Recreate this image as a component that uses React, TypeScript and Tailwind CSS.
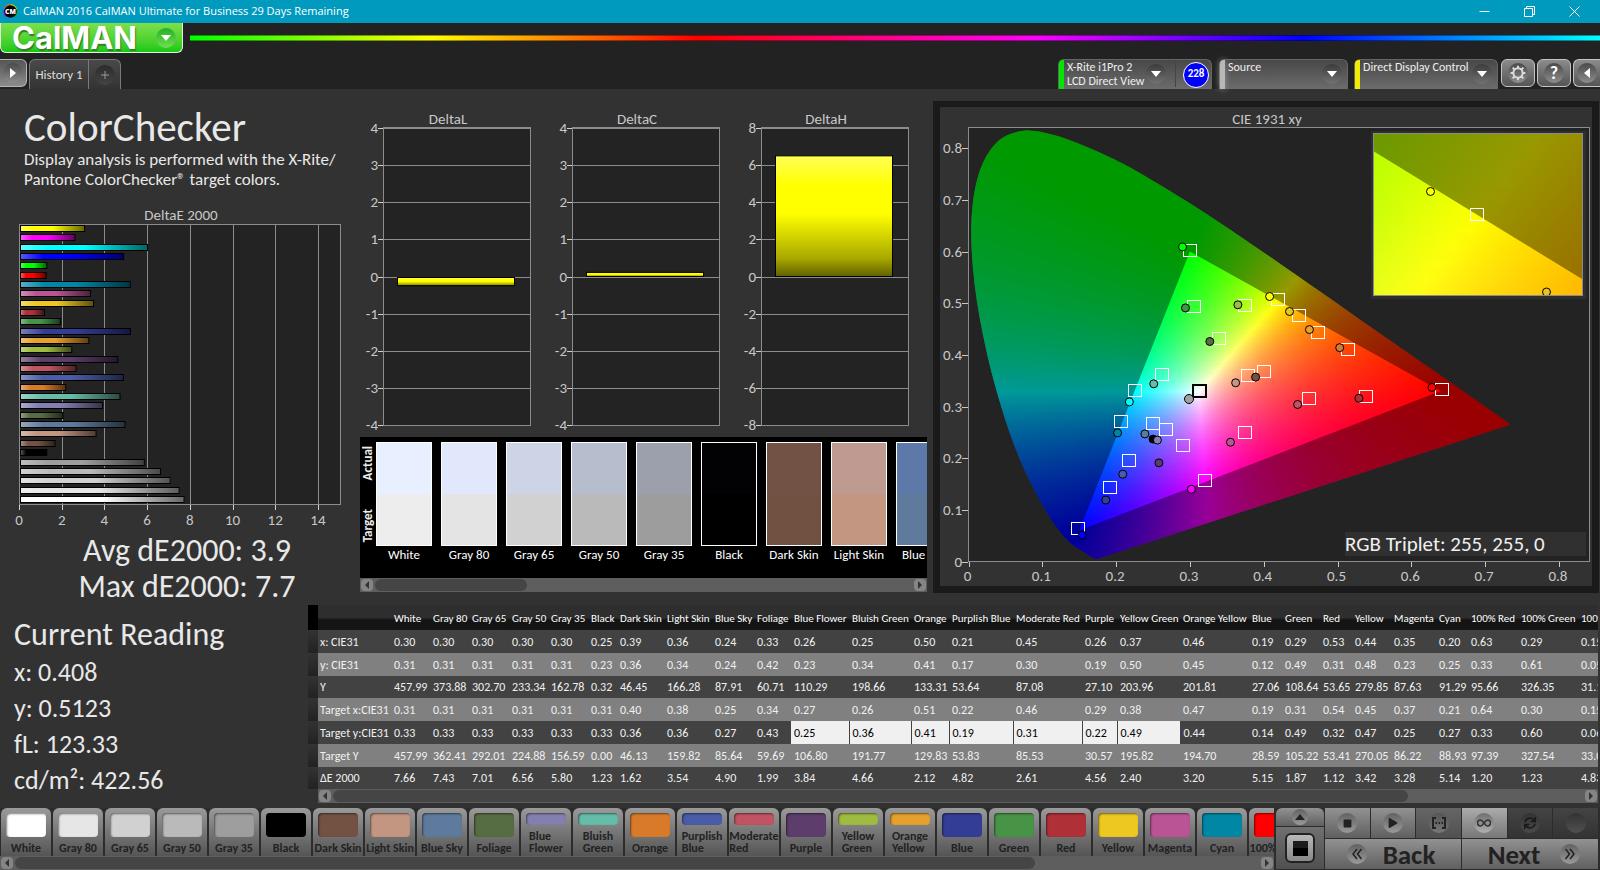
import type { ReactNode } from "react";
import { FaPlay, FaStop, FaSync } from "react-icons/fa";
import { twMerge } from "tailwind-merge";

type Patch = {
  name: string;
  target: string;
  lines?: [string, string];
  values: string[];
  width: string;
};

const ROW_LABELS = ["x: CIE31", "y: CIE31", "Y", "Target x:CIE31", "Target y:CIE31", "Target Y", "ΔE 2000"];

const PATCHES: Patch[] = [
  { name: "White", target: "#ffffff", width: "w-[39px]", values: ["0.30", "0.31", "457.99", "0.31", "0.33", "457.99", "7.66"] },
  { name: "Gray 80", target: "#e6e6e6", width: "w-[39px]", values: ["0.30", "0.31", "373.88", "0.31", "0.33", "362.41", "7.43"] },
  { name: "Gray 65", target: "#d1d1d1", width: "w-[40px]", values: ["0.30", "0.31", "302.70", "0.31", "0.33", "292.01", "7.01"] },
  { name: "Gray 50", target: "#bababa", width: "w-[39px]", values: ["0.30", "0.31", "233.34", "0.31", "0.33", "224.88", "6.56"] },
  { name: "Gray 35", target: "#9e9e9e", width: "w-[40px]", values: ["0.30", "0.31", "162.78", "0.31", "0.33", "156.59", "5.80"] },
  { name: "Black", target: "#000000", width: "w-[29px]", values: ["0.25", "0.23", "0.32", "0.31", "0.33", "0.00", "1.23"] },
  { name: "Dark Skin", target: "#735244", width: "w-[47px]", values: ["0.39", "0.36", "46.45", "0.40", "0.36", "46.13", "1.62"] },
  { name: "Light Skin", target: "#c39682", width: "w-[48px]", values: ["0.36", "0.34", "166.28", "0.38", "0.36", "159.82", "3.54"] },
  { name: "Blue Sky", target: "#5e7a9c", width: "w-[42px]", values: ["0.24", "0.24", "87.91", "0.25", "0.27", "85.64", "4.90"] },
  { name: "Foliage", target: "#566c42", width: "w-[37px]", values: ["0.33", "0.42", "60.71", "0.34", "0.43", "59.69", "1.99"] },
  { name: "Blue Flower", target: "#8380b1", lines: ["Blue", "Flower"], width: "w-[58px]", values: ["0.26", "0.23", "110.29", "0.27", "0.25", "106.80", "3.84"] },
  { name: "Bluish Green", target: "#65bda9", lines: ["Bluish", "Green"], width: "w-[62px]", values: ["0.25", "0.34", "198.66", "0.26", "0.36", "191.77", "4.66"] },
  { name: "Orange", target: "#d87a2a", width: "w-[38px]", values: ["0.50", "0.41", "133.31", "0.51", "0.41", "129.83", "2.12"] },
  { name: "Purplish Blue", target: "#4a5ca7", lines: ["Purplish", "Blue"], width: "w-[64px]", values: ["0.21", "0.17", "53.64", "0.22", "0.19", "53.83", "4.82"] },
  { name: "Moderate Red", target: "#c25362", lines: ["Moderate", "Red"], width: "w-[69px]", values: ["0.45", "0.30", "87.08", "0.46", "0.31", "85.53", "2.61"] },
  { name: "Purple", target: "#5c3d6b", width: "w-[35px]", values: ["0.26", "0.19", "27.10", "0.29", "0.22", "30.57", "4.56"] },
  { name: "Yellow Green", target: "#9fbc40", lines: ["Yellow", "Green"], width: "w-[63px]", values: ["0.37", "0.50", "203.96", "0.38", "0.49", "195.82", "2.40"] },
  { name: "Orange Yellow", target: "#e6a02d", lines: ["Orange", "Yellow"], width: "w-[69px]", values: ["0.46", "0.45", "201.81", "0.47", "0.44", "194.70", "3.20"] },
  { name: "Blue", target: "#333d96", width: "w-[33px]", values: ["0.19", "0.12", "27.06", "0.19", "0.14", "28.59", "5.15"] },
  { name: "Green", target: "#479447", width: "w-[38px]", values: ["0.29", "0.49", "108.64", "0.31", "0.49", "105.22", "1.87"] },
  { name: "Red", target: "#b03038", width: "w-[32px]", values: ["0.53", "0.31", "53.65", "0.54", "0.32", "53.41", "1.12"] },
  { name: "Yellow", target: "#edc821", width: "w-[39px]", values: ["0.44", "0.48", "279.85", "0.45", "0.47", "270.05", "3.42"] },
  { name: "Magenta", target: "#bb5495", width: "w-[45px]", values: ["0.35", "0.23", "87.63", "0.37", "0.25", "86.22", "3.28"] },
  { name: "Cyan", target: "#0087a6", width: "w-[32px]", values: ["0.20", "0.25", "91.29", "0.21", "0.27", "88.93", "5.14"] },
  { name: "100% Red", target: "#ff0000", width: "w-[50px]", values: ["0.63", "0.33", "95.66", "0.64", "0.33", "97.39", "1.20"] },
  { name: "100% Green", target: "#00ff00", width: "w-[60px]", values: ["0.29", "0.61", "326.35", "0.30", "0.60", "327.54", "1.23"] },
  { name: "100% Blue", target: "#0000ff", width: "w-[54px]", values: ["0.15", "0.05", "31.10", "0.15", "0.06", "33.02", "4.83"] },
];

const ACTUAL = ["#e8efff", "#e1e8fc", "#cdd4e6", "#b6bdcd", "#9ca0ac", "#020204", "#725244", "#bf9a90", "#5c79aa"];
const TARGET = ["#ededed", "#e4e4e4", "#d1d1d1", "#bababa", "#9d9d9d", "#000000", "#715142", "#c39681", "#5e7a9c"];

const DELTA_E: [string, number][] = [
  ["#ffff00", 3.0],
  ["#ff00ff", 2.55],
  ["#00ffff", 5.95],
  ...PATCHES.map((p): [string, number] => [p.target, Number(p.values[6])]).reverse(),
];

/* CIE diagram */

const LOCUS: [number, number][] = [
  [0.1741, 0.005], [0.1714, 0.0051], [0.1689, 0.0069], [0.1644, 0.0109], [0.1566, 0.0177],
  [0.144, 0.0297], [0.1355, 0.0399], [0.1241, 0.0578], [0.1096, 0.0868], [0.0913, 0.1327],
  [0.0687, 0.2007], [0.0454, 0.295], [0.0235, 0.4127], [0.0082, 0.5384], [0.0039, 0.6548],
  [0.0139, 0.7502], [0.0389, 0.812], [0.0743, 0.8338], [0.1142, 0.8262], [0.1547, 0.8059],
  [0.1929, 0.7816], [0.2296, 0.7543], [0.3016, 0.6923], [0.3731, 0.6245], [0.4441, 0.5547],
  [0.5125, 0.4866], [0.5752, 0.4242], [0.627, 0.3725], [0.6658, 0.334], [0.6915, 0.3083],
  [0.719, 0.2809], [0.7347, 0.2653],
];

const TARGET_POINTS: [number, number][] = [
  [0.3, 0.602], [0.305, 0.492], [0.375, 0.495], [0.34, 0.43], [0.262, 0.362], [0.225, 0.33],
  [0.207, 0.271], [0.25, 0.267], [0.268, 0.255], [0.29, 0.223], [0.217, 0.194], [0.192, 0.142],
  [0.149, 0.063], [0.321, 0.156], [0.374, 0.248], [0.379, 0.359], [0.4, 0.367], [0.42, 0.507],
  [0.448, 0.476], [0.474, 0.442], [0.514, 0.409], [0.462, 0.314], [0.538, 0.318], [0.641, 0.332],
];

const ACTUAL_POINTS: [number, number, string][] = [
  [0.29, 0.609, "#00ff00"], [0.294, 0.491, "#46934a"], [0.365, 0.497, "#9dbb40"],
  [0.327, 0.426, "#566c41"], [0.251, 0.344, "#66bcab"], [0.218, 0.309, "#00ffff"],
  [0.202, 0.249, "#0085a4"], [0.239, 0.247, "#5d7a9f"], [0.25, 0.237, "#000000"],
  [0.256, 0.235, "#8380af"], [0.258, 0.191, "#5b3c69"], [0.209, 0.169, "#4b5ba6"],
  [0.186, 0.119, "#333f98"], [0.154, 0.051, "#0000ff"], [0.302, 0.14, "#ff00ff"],
  [0.355, 0.231, "#ba5596"], [0.362, 0.346, "#c49683"], [0.389, 0.357, "#735244"],
  [0.408, 0.513, "#ffff00"], [0.435, 0.484, "#e8c520"], [0.462, 0.449, "#e6a02e"],
  [0.503, 0.414, "#d77a2a"], [0.446, 0.304, "#c15264"], [0.529, 0.316, "#af2f38"],
  [0.628, 0.337, "#ff0000"],
];

type View = { x0: number; y0: number; sx: number; sy: number };

const MAIN: View = { x0: 28.5, y0: 454.5, sx: 738, sy: 516.5 };
const INSET: View = { x0: 537 - 0.4193 * 4300, y0: 107.5 + 0.5053 * 3320, sx: 4300, sy: 3320 };

const px = (v: View, x: number) => v.x0 + x * v.sx;
const py = (v: View, y: number) => v.y0 - y * v.sy;

function colorAt(x: number, y: number): number[] {
  const yy = Math.max(y, 0.001);
  const X = x / yy;
  const Z = (1 - x - yy) / yy;
  const rgb = [
    3.2406 * X - 1.5372 - 0.4986 * Z,
    -0.9689 * X + 1.8758 + 0.0415 * Z,
    0.0557 * X - 0.204 + 1.057 * Z,
  ].map((c) => Math.max(0, c));
  const top = Math.max(...rgb);
  return rgb.map((c) => Math.round((c / top) * 255));
}

// Fewest stops that keep a row within a few levels of the true colour.
function rowStops(v: View, y: number, from: number, to: number): [number, number[]][] {
  const at = (p: number) => colorAt((p - v.x0) / v.sx, y);
  const split = (a: number, ca: number[], b: number, cb: number[]): [number, number[]][] => {
    if (b - a < 2) return [[b, cb]];
    const m = (a + b) / 2;
    const cm = at(m);
    const off = Math.max(...cm.map((c, i) => Math.abs(c - (ca[i] + cb[i]) / 2)));
    if (off < 3 && b - a < 40) return [[b, cb]];
    return [...split(a, ca, m, cm), ...split(m, cm, b, cb)];
  };
  const first = at(from);
  return [[from, first], ...split(from, first, to, at(to))];
}

function Spectrum({ id, view, box }: { id: string; view: View; box: [number, number, number, number] }) {
  const [left, top, right, bottom] = box;
  const step = 2;
  const rows: number[] = [];
  for (let y = top; y < bottom; y += step) rows.push(y);
  return (
    <g shapeRendering="crispEdges">
      {rows.map((r) => (
        <g key={r}>
          <linearGradient id={`${id}${r}`} gradientUnits="userSpaceOnUse" x1={left} x2={right} y1="0" y2="0">
            {rowStops(view, (view.y0 - r - step / 2) / view.sy, left, right).map(([p, c]) => (
              <stop key={p} offset={(p - left) / (right - left)} stopColor={`rgb(${c.join(",")})`} />
            ))}
          </linearGradient>
          <rect x={left} y={r} width={right - left} height={step} fill={`url(#${id}${r})`} />
        </g>
      ))}
    </g>
  );
}

function locusPath(v: View) {
  const p = LOCUS.map(([x, y]) => [px(v, x), py(v, y)]);
  let d = `M${p[0][0]} ${p[0][1]}`;
  for (let i = 0; i < p.length - 1; i++) {
    const a = p[Math.max(0, i - 1)];
    const b = p[i];
    const c = p[i + 1];
    const e = p[Math.min(p.length - 1, i + 2)];
    d += `C${b[0] + (c[0] - a[0]) / 6} ${b[1] + (c[1] - a[1]) / 6} ${c[0] - (e[0] - b[0]) / 6} ${c[1] - (e[1] - b[1]) / 6} ${c[0]} ${c[1]}`;
  }
  return d + "Z";
}

function shadePath(v: View) {
  const t = [[0.64, 0.33], [0.3, 0.6], [0.15, 0.06]].map(([x, y]) => `${px(v, x)} ${py(v, y)}`);
  return `M0 0H652V480H0ZM${t.join("L")}Z`;
}

function CieChart() {
  return (
    <svg viewBox="0 0 652 479" className="block w-full text-[15px]" role="img" aria-label="CIE 1931 xy">
      <defs>
        <clipPath id="locus">
          <path d={locusPath(MAIN)} />
        </clipPath>
        <clipPath id="inset">
          <rect x="434" y="27" width="208" height="161" />
        </clipPath>
      </defs>
      <text x="327" y="17" textAnchor="middle" fill="#c8c8c8">CIE 1931 xy</text>
      <rect x="28.5" y="20.5" width="621" height="434" fill="#232323" stroke="#8c8c8c" />
      {[0, 0.1, 0.2, 0.3, 0.4, 0.5, 0.6, 0.7, 0.8].map((t) => (
        <g key={t} fill="#c8c8c8">
          <rect x={Math.round(px(MAIN, t))} y="455" width="1" height="5" />
          <text x={px(MAIN, t) - 1} y="474" textAnchor="middle">{t}</text>
          <rect x="22" y={Math.round(py(MAIN, t))} width="6" height="1" />
          <text x="22" y={py(MAIN, t) + 5} textAnchor="end">{t}</text>
        </g>
      ))}
      <g clipPath="url(#locus)">
        <Spectrum id="m" view={MAIN} box={[29, 22, 573, 454]} />
        <path d={shadePath(MAIN)} fillRule="evenodd" opacity="0.4" />
      </g>
      {TARGET_POINTS.map(([x, y]) => (
        <rect key={`${x}-${y}`} x={Math.round(px(MAIN, x)) - 6.5} y={Math.round(py(MAIN, y)) - 6.5} width="13" height="12" fill="none" stroke="#fff" />
      ))}
      <rect x="253" y="278" width="13" height="12" fill="none" stroke="#000" strokeWidth="2" />
      <circle cx="249" cy="292" r="4.5" fill="#a0a0a0" stroke="#000" />
      {ACTUAL_POINTS.map(([x, y, c]) => (
        <circle key={`${x}-${y}`} cx={px(MAIN, x)} cy={py(MAIN, y)} r="4" fill={c} stroke="#000" />
      ))}
      <rect x="431" y="24" width="215" height="168" fill="#2e2e2e" />
      <g clipPath="url(#inset)">
        <Spectrum id="z" view={INSET} box={[434, 26, 642, 188]} />
        <path d={shadePath(INSET)} fillRule="evenodd" opacity="0.4" />
        <rect x="530.5" y="101.5" width="13" height="12" fill="none" stroke="#fff" />
        <circle cx="490.5" cy="84.5" r="4" fill="#ffff00" stroke="#000" />
        <circle cx="606.5" cy="185" r="4" fill="#e8c520" stroke="#000" />
      </g>
      <rect x="433.5" y="26.5" width="209" height="162" fill="none" stroke="#8c8c8c" />
      <rect x="405" y="425" width="241" height="24" fill="#303030" />
      <text x="405" y="444" fill="#f0f0f0" className="text-[21px]">RGB Triplet: 255, 255, 0</text>
    </svg>
  );
}

function DeltaEChart() {
  return (
    <svg viewBox="0 0 360 324" className="mt-4 block w-full text-[15px]" role="img" aria-label="DeltaE 2000">
      <defs>
        <linearGradient id="sheenX">
          <stop offset="0" stopColor="#fff" stopOpacity="0.35" />
          <stop offset="0.22" stopColor="#fff" stopOpacity="0" />
          <stop offset="0.5" stopColor="#000" stopOpacity="0" />
          <stop offset="1" stopColor="#000" stopOpacity="0.6" />
        </linearGradient>
      </defs>
      <text x="181" y="14" textAnchor="middle" fill="#c8c8c8">DeltaE 2000</text>
      <rect x="19.5" y="18.5" width="321" height="280" fill="#232323" stroke="#8c8c8c" />
      {[0, 2, 4, 6, 8, 10, 12, 14].map((t) => (
        <g key={t}>
          <rect x={Math.floor(19.5 + t * 21.35)} y="19" width="1" height="280" fill="#8c8c8c" />
          <rect x={Math.floor(19.5 + t * 21.35)} y="299" width="1" height="5" fill="#d0d0d0" />
          <text x={19 + t * 21.35} y="319" textAnchor="middle" fill="#c8c8c8">{t}</text>
        </g>
      ))}
      {DELTA_E.map(([color, value], i) => {
        const box = { x: 20.5, y: Math.round(19 + i * 9.34) + 0.5, width: value * 21.35, height: 6 };
        return (
          <g key={i}>
            <rect {...box} fill={color} />
            <rect {...box} fill="url(#sheenX)" stroke="#000" />
          </g>
        );
      })}
    </svg>
  );
}

function DeltaChart({ title, max, value }: { title: string; max: number; value: number }) {
  const unit = 148.5 / max;
  const zero = 169.5;
  const ticks = [4, 3, 2, 1, 0, -1, -2, -3, -4].map((t) => (t * max) / 4);
  const box = { x: 37.5, y: value > 0 ? zero - value * unit : zero + 1, width: 117, height: Math.abs(value) * unit };
  const id = `sheen${title}`;
  return (
    <svg viewBox="0 0 189 330" className="block w-full text-[15px]" role="img" aria-label={title}>
      <linearGradient id={id} x1="0" x2="0" y1="0" y2="1">
        <stop offset="0" stopColor="#ffff55" />
        <stop offset="0.25" stopColor="#ffff00" />
        <stop offset="0.48" stopColor="#ffff00" />
        <stop offset="0.85" stopColor="#a8a800" />
        <stop offset="1" stopColor="#606000" />
      </linearGradient>
      <text x="88" y="17" textAnchor="middle" fill="#c8c8c8">{title}</text>
      <rect x="23.5" y="20.5" width="147" height="298" fill="#232323" stroke="#8c8c8c" />
      {ticks.map((t) => (
        <g key={t}>
          <rect x="18" y={Math.round(zero - t * unit)} width="5" height="1" fill="#d0d0d0" />
          <rect x="23" y={Math.round(zero - t * unit)} width="148" height="1" fill="#8c8c8c" />
          <text x="18" y={zero - t * unit + 5} textAnchor="end" fill="#c8c8c8">{t}</text>
        </g>
      ))}
      <rect {...box} fill={`url(#${id})`} stroke="#000" />
    </svg>
  );
}

/* Small parts */

function ScrollBar({ thumb, label }: { thumb: string; label: string }) {
  return (
    <div className="flex h-[14px] shrink-0 items-center bg-[#5e5e5e] px-px" role="group" aria-label={label}>
      <ScrollArrow dir="left" />
      <div className="flex h-full flex-1 px-0.5 py-px">
        <div className={`rounded-md bg-[#454545] ${thumb}`} />
      </div>
      <ScrollArrow dir="right" />
    </div>
  );
}

function ScrollArrow({ dir }: { dir: "left" | "right" }) {
  return (
    <button aria-label={`Scroll ${dir}`} className="flex h-3 w-3 shrink-0 items-center justify-center rounded-sm bg-[#858585]">
      <svg viewBox="0 0 6 8" className="h-2 w-1.5 fill-[#333]">
        <path d={dir === "left" ? "M5 0V8L1 4Z" : "M1 0V8L5 4Z"} />
      </svg>
    </button>
  );
}

function Knob({ children, className = "" }: { children?: ReactNode; className?: string }) {
  return (
    <span className={twMerge("flex size-5 shrink-0 items-center justify-center rounded-full bg-linear-to-b from-[#4a4a4a] to-[#8e8e8e]", className)}>
      {children}
    </span>
  );
}

function Caret({ className = "" }: { className?: string }) {
  return (
    <svg viewBox="0 0 10 6" className={`h-1.5 w-2.5 fill-current ${className}`}>
      <path d="M0 0H10L5 6Z" />
    </svg>
  );
}

function DeviceTab({ bar, lines, width, children }: { bar: string; lines: string[]; width: string; children?: ReactNode }) {
  return (
    <div className={`flex h-[30px] rounded-t-md border border-b-0 border-[#666] bg-linear-to-b from-[#484848] to-[#6c6c6c] ${width}`}>
      <span className={`w-[5px] shrink-0 rounded-tl-sm ${bar}`} />
      <button className="flex min-w-0 flex-1 items-start justify-between pr-[5px] pl-[3px] text-left text-xs leading-[14px] whitespace-nowrap text-[#eee]">
        <span>
          {lines.map((l) => (
            <span key={l} className="block">{l}</span>
          ))}
        </span>
        <Knob className="mt-1 -ml-2 from-[#3c3c3c] to-[#727272] text-white">
          <Caret />
        </Knob>
      </button>
      {children}
    </div>
  );
}

const squareButton =
  "flex h-7 items-center justify-center rounded-md border border-[#c4c4c4] bg-linear-to-b from-[#8c8c8c] to-[#555]";

function TitleBar() {
  return (
    <div className="flex h-[23px] items-center bg-[#009abf] [font-family:'Open_Sans',sans-serif] text-white">
      <svg viewBox="0 0 18 18" className="mx-[3px] size-[15px] overflow-visible">
        <path d="M9 9V0A9 9 0 0 1 17 6Z" fill="#b5e000" />
        <path d="M9 9 17 6A9 9 0 0 1 14 16Z" fill="#00b050" />
        <path d="M9 9 14 16A9 9 0 0 1 4 16Z" fill="#00a8e0" />
        <path d="M9 9 4 16A9 9 0 0 1 1 6Z" fill="#b010d0" />
        <path d="M9 9 1 6A9 9 0 0 1 9 0Z" fill="#ff6a00" />
        <circle cx="9" cy="9" r="7.5" fill="#000" />
        <text x="9" y="12" textAnchor="middle" fontSize="8" fontWeight="800" fill="#fff">CM</text>
      </svg>
      <h1 className="ml-0.5 text-[11px]">CalMAN 2016 CalMAN Ultimate for Business 29 Days Remaining</h1>
      <div className="ml-auto flex pr-[3px]">
        <button aria-label="Minimize" className="flex w-[45px] justify-center">
          <svg viewBox="0 0 11 11" className="size-[11px]" stroke="#fff" fill="none"><path d="M0.5 5.5H10.5" /></svg>
        </button>
        <button aria-label="Restore" className="flex w-[45px] justify-center">
          <svg viewBox="0 0 11 11" className="size-[11px]" stroke="#fff" fill="none"><path d="M0.5 2.5H8.5V10.5H0.5ZM2.5 2.5V0.5H10.5V8.5H8.5" /></svg>
        </button>
        <button aria-label="Close" className="flex w-[45px] justify-center">
          <svg viewBox="0 0 11 11" className="size-[11px]" stroke="#fff" fill="none"><path d="M0.5 0.5 10.5 10.5M10.5 0.5 0.5 10.5" /></svg>
        </button>
      </div>
    </div>
  );
}

function Header() {
  return (
    <header className="bg-[#222] text-white">
      <div className="flex h-[30px] items-center gap-[7px]">
        <button className="flex h-full w-[183px] items-center rounded-b-md border border-t-0 border-[#dff5d8] bg-linear-to-b from-[#7be04c] to-[#10c814] pl-[11px]">
          <span className="[font-family:Inter,sans-serif] text-[31px] leading-none font-bold [text-shadow:1px_2px_1px_#3a7a2a]">CalMAN</span>
          <Knob className="mr-1.5 ml-auto from-[#1fae2a] to-[#6fe04f]">
            <Caret />
          </Knob>
        </button>
        <div className="h-1.5 flex-1 border-y border-black/40 bg-[linear-gradient(to_right,#00ff00_0%,#ffff00_17%,#ff0000_36%,#ff00ff_60%,#0000ff_79%,#00ffff_100%)]" />
      </div>
      <div className="flex h-9 items-end justify-between">
        <div className="flex items-end">
          <button aria-label="Expand" className="mb-0.5 flex h-7 w-[27px] items-center justify-center rounded-r-md border border-l-0 border-[#b4b4b4] bg-linear-to-b from-[#555] to-[#8c8c8c]">
            <Knob>
              <Caret className="-rotate-90" />
            </Knob>
          </button>
          <div className="ml-0.5 flex h-[30px] rounded-t-md border border-b-0 border-[#7a7a7a] bg-linear-to-b from-[#494949] to-[#333] text-[#ddd]">
            <button className="w-[58px] text-[13px]">History 1</button>
            <button aria-label="Add tab" className="flex w-8 items-center justify-center border-l border-[#7a7a7a]">
              <Knob className="from-[#2c2c2c] to-[#444] text-[#999]">
                <svg viewBox="0 0 8 8" className="size-2" stroke="currentColor"><path d="M4 0V8M0 4H8" /></svg>
              </Knob>
            </button>
          </div>
        </div>
        <div className="flex items-end">
          <DeviceTab bar="bg-[#00e600]" lines={["X-Rite i1Pro 2", "LCD Direct View"]} width="w-[154px]">
            <span className="my-0.5 ml-1 w-px bg-[#444]" />
            <span className="mr-0.5 ml-[7px] flex size-[26px] shrink-0 items-center justify-center self-center rounded-full border border-white bg-[#0000ff] text-[11px] font-bold">228</span>
          </DeviceTab>
          <span className="w-[7px]" />
          <DeviceTab bar="bg-[#b8b8b8] shadow-[0_0_6px_#999]" lines={["Source"]} width="w-[129px]" />
          <span className="w-1.5" />
          <DeviceTab bar="bg-[#f2ec00]" lines={["Direct Display Control"]} width="w-[144px]" />
          <div className="mb-0.5 ml-[3px] flex gap-0.5">
            <button aria-label="Settings" className={`${squareButton} w-[34px]`}>
              <Knob>
                <svg viewBox="0 0 24 24" className="size-4" fill="none" stroke="#ddd" strokeWidth="3">
                  <circle cx="12" cy="12" r="7" />
                  <path d="M12 1V5M12 19V23M1 12H5M19 12H23M4 4 7 7M17 17 20 20M4 20 7 17M17 7 20 4" />
                </svg>
              </Knob>
            </button>
            <button aria-label="Help" className={`${squareButton} w-[34px]`}>
              <Knob className="text-lg leading-none font-bold">?</Knob>
            </button>
            <button aria-label="Collapse" className={`${squareButton} w-[27px] rounded-r-none border-r-0`}>
              <Knob>
                <Caret className="rotate-90" />
              </Knob>
            </button>
          </div>
        </div>
      </div>
    </header>
  );
}

function SwatchPanel() {
  return (
    <div className="bg-black">
      <div className="flex h-[141px] overflow-hidden pt-[5px]">
        <div className="flex h-[104px] w-4 shrink-0 flex-col items-center justify-between py-1 text-[13px] leading-4 font-bold text-[#eee]">
          <span className="rotate-180 [writing-mode:vertical-rl]">Actual</span>
          <span className="rotate-180 [writing-mode:vertical-rl]">Target</span>
        </div>
        <div className="flex w-0 flex-1 gap-[9px]">
          {ACTUAL.map((c, i) => (
            <div key={i} className="w-14 shrink-0 text-center text-[13px] leading-4 whitespace-nowrap text-white">
              <div className="h-[104px] border border-white">
                <div className="h-1/2" style={{ backgroundColor: c }} />
                <div className="h-1/2" style={{ backgroundColor: TARGET[i] }} />
              </div>
              <p className="mt-px">{PATCHES[i].name}</p>
            </div>
          ))}
        </div>
      </div>
      <ScrollBar label="Swatches" thumb="w-[152px]" />
    </div>
  );
}

const ROW_HEIGHTS = ["h-[23px]", "h-[23px]", "h-[22px]", "h-[23px]", "h-[23px]", "h-[23px]", "h-[22px]"];

function DataTable() {
  return (
    <div className="mr-0.5 min-w-0 flex-1">
      <div className="overflow-hidden">
        <table className="w-[1322px] table-fixed border-collapse text-left text-xs leading-4 whitespace-nowrap text-[#f0f0f0]">
          <thead>
            <tr className="h-[25px] bg-linear-to-b from-[#2e2e2e] from-50% to-[#141414] to-60% text-[11px]">
              <td className="w-2.5 bg-black" />
              <td className="w-[73px]" />
              {PATCHES.map((p) => (
                <th key={p.name} scope="col" className={`px-[3px] pt-0.5 font-normal text-white ${p.width}`}>{p.name}</th>
              ))}
            </tr>
          </thead>
          <tbody>
            {ROW_LABELS.map((label, r) => (
              <tr key={label} className={`${ROW_HEIGHTS[r]} ${r % 2 ? "bg-[#808080]" : "bg-[#424242]"}`}>
                <td className="bg-linear-to-b from-[#333] to-[#222]" />
                <th scope="row" className="px-0.5 font-normal">{label}</th>
                {PATCHES.map((p, i) => {
                  const picked = r === 4 && i >= 10 && i <= 16;
                  return (
                    <td key={p.name} className={picked ? "border-r border-[#424242] bg-[#f0f0f0] px-[3px] text-black" : "px-[3px]"}>
                      {p.values[r]}
                    </td>
                  );
                })}
              </tr>
            ))}
          </tbody>
        </table>
      </div>
      <div className="ml-2.5">
        <ScrollBar label="Measurements" thumb="w-[86%]" />
      </div>
    </div>
  );
}

const keyButton = "flex items-center justify-center bg-linear-to-b from-[#929292] to-[#606060] text-[#222]";
const keyKnob = "from-[#626262] to-[#9a9a9a]";

function PatchBar() {
  return (
    <div className="flex min-w-0 flex-1 flex-col">
      <div className="flex gap-0.5 overflow-hidden pl-px">
        {PATCHES.slice(0, 25).map((p) => (
          <button
            key={p.name}
            className="flex h-12 w-[50px] shrink-0 flex-col items-center justify-between rounded-t-md bg-linear-to-b from-[#9a9a9a] to-[#555] pt-[5px] text-xs leading-3 font-bold whitespace-nowrap text-[#222]"
          >
            <span
              className={`w-10 rounded-sm shadow-[inset_1px_1px_2px_rgba(0,0,0,0.5)] ${p.lines ? "h-3" : "h-6"}`}
              style={{ backgroundColor: p.target }}
            />
            {p.lines ? (
              <span className="pb-0.5 text-left">
                {p.lines[0]}
                <br />
                {p.lines[1]}
              </span>
            ) : (
              <span className="pb-0.5">{p.name}</span>
            )}
          </button>
        ))}
      </div>
      <ScrollBar label="Patches" thumb="w-[82%]" />
    </div>
  );
}

function Transport() {
  return (
    <div className="mx-0.5 flex gap-px pb-px">
      <div className="flex w-12 flex-col gap-px">
        <button aria-label="More" className={`${keyButton} h-[18px] rounded-t-md`}>
          <Knob className={`${keyKnob} size-4`}>
            <Caret className="rotate-180" />
          </Knob>
        </button>
        <button aria-label="Pattern window" className={twMerge(keyButton, "flex-1 from-[#707070] to-[#505050]")}>
          <span className="flex size-[30px] items-center justify-center rounded-md border-2 border-[#222] bg-linear-to-b from-[#b8b8b8] to-[#888]">
            <span className="size-[15px] bg-linear-to-b from-[#1c1c1c] from-50% to-black to-50%" />
          </span>
        </button>
      </div>
      <div className="grid w-[273px] grid-cols-6 grid-rows-[30px_30px] gap-px">
        <button aria-label="Stop" className={keyButton}><Knob className={keyKnob}><FaStop size={9} /></Knob></button>
        <button aria-label="Play" className={keyButton}><Knob className={keyKnob}><FaPlay size={10} /></Knob></button>
        <button aria-label="Read series" className={twMerge(keyButton, "from-[#666] to-[#505050]")}>
          <Knob className="from-[#555] to-[#777]">
            <svg viewBox="0 0 14 12" className="h-3 w-3.5" fill="none" stroke="#222" strokeWidth="2">
              <path d="M4 1H1V11H4M10 1H13V11H10" />
              <path d="M3.500 6H11" strokeDasharray="1.500 1.500" />
            </svg>
          </Knob>
        </button>
        <button aria-label="Continuous" className={twMerge(keyButton, "from-[#ababab] to-[#787878]")}>
          <Knob className="from-[#707070] to-[#b0b0b0]">
            <svg viewBox="0 0 14 8" className="h-2 w-3.5" fill="none" stroke="#333" strokeWidth="1.500">
              <path d="M7 4C5.500 2 4.500 1 3.500 1a3 3 0 0 0 0 6C4.500 7 5.500 6 7 4S9.500 1 10.500 1a3 3 0 0 1 0 6C9.500 7 8.500 6 7 4Z" />
            </svg>
          </Knob>
        </button>
        <button aria-label="Refresh" className={twMerge(keyButton, "from-[#444] to-[#333]")}><Knob className="from-[#333] to-[#4a4a4a] text-[#1a1a1a]"><FaSync size={12} /></Knob></button>
        <button aria-label="Record" className={twMerge(keyButton, "from-[#444] to-[#333]")}><Knob className="from-[#333] to-[#505050]" /></button>
        <button className={`${keyButton} col-span-3 gap-4 pr-1 text-[27px] leading-none font-bold`}>
          <Knob className={keyKnob}><Chevrons className="rotate-180" /></Knob>
          Back
        </button>
        <button className={`${keyButton} col-span-3 gap-5 pl-2 text-[27px] leading-none font-bold`}>
          Next
          <Knob className={keyKnob}><Chevrons /></Knob>
        </button>
      </div>
    </div>
  );
}

function Chevrons({ className = "" }: { className?: string }) {
  return (
    <svg viewBox="0 0 12 12" className={`size-3 ${className}`} fill="none" stroke="#222" strokeWidth="1.500">
      <path d="M1.500 1 5.500 6 1.500 11M6 1 10 6 6 11" />
    </svg>
  );
}

export default function App() {
  return (
    <div className="flex min-h-screen flex-col bg-[#323232] [font-family:Carlito,Lato,sans-serif] text-[#e8e8e8]">
      <TitleBar />
      <Header />
      <main className="flex-1">
        <div className="flex">
          <section className="w-[360px] shrink-0 pt-[15px]">
            <div className="pl-6 whitespace-nowrap">
              <h2 className="text-[41px] leading-[46px]">ColorChecker</h2>
              <p className="text-[17px] leading-5">
                Display analysis is performed with the X-Rite/
                <br />
                Pantone ColorChecker® target colors.
              </p>
            </div>
            <DeltaEChart />
            <div className="mt-[3px] pl-3.5 text-center text-[32px] leading-9">
              <p>Avg dE2000: 3.9</p>
              <p>Max dE2000: 7.7</p>
            </div>
          </section>
          <section className="min-w-0 flex-[567] pt-[18px]">
            <div className="grid grid-cols-3">
              <DeltaChart title="DeltaL" max={4} value={-0.22} />
              <DeltaChart title="DeltaC" max={4} value={0.11} />
              <DeltaChart title="DeltaH" max={8} value={6.5} />
            </div>
            <SwatchPanel />
          </section>
          <section className="mr-px ml-1.5 min-w-0 flex-[666] self-start pt-3">
            <div className="border-[7px] border-t-[6px] border-[#1a1a1a]">
              <CieChart />
            </div>
          </section>
        </div>
        <div className="flex">
          <section className="w-[308px] shrink-0 pt-3 pl-3.5">
            <h3 className="text-[32px] leading-9">Current Reading</h3>
            <ul className="mt-px text-[26px] leading-9">
              <li>x: 0.408</li>
              <li>y: 0.5123</li>
              <li>fL: 123.33</li>
              <li>cd/m²: 422.56</li>
            </ul>
          </section>
          <DataTable />
        </div>
      </main>
      <footer className="flex bg-[#2c2c2c]">
        <PatchBar />
        <Transport />
      </footer>
    </div>
  );
}
